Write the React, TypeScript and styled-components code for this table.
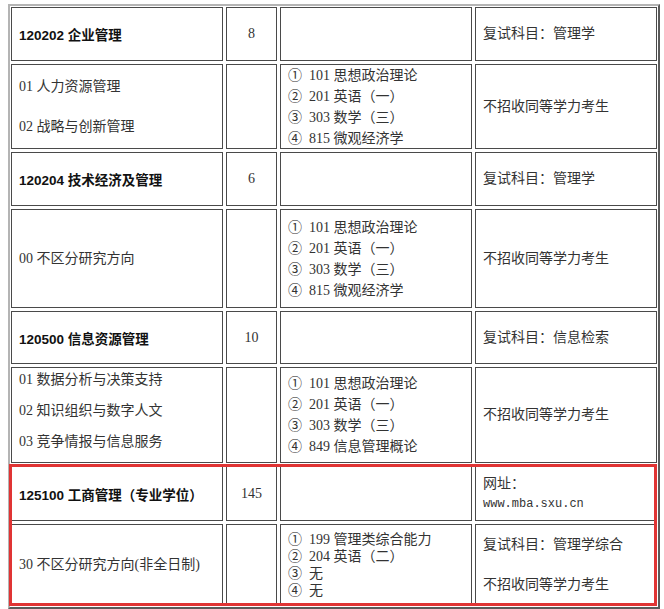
import React from 'react';
import styled, { createGlobalStyle } from 'styled-components';

const GlobalStyle = createGlobalStyle`
  body {
    margin: 0;
    background: #fff;
    font-family: "Liberation Serif", "Noto Sans CJK SC", serif;
  }
`;

const Page = styled.div`
  position: relative;
  padding: 4px 0 0 8px;
`;

const Table = styled.div`
  display: grid;
  grid-template-columns: 212px 51px 192px 182px;
  grid-template-rows: 54px 85px 54px 99px 53px 96px 55px 82px;
  gap: 3px;
  padding: 1px;
  width: max-content;
  border: 2px solid;
  border-color: #b4b4b4 #5a5a5a #5a5a5a #b4b4b4;
`;

const Cell = styled.div<{ $center?: boolean; $gap?: number; $lift?: number }>`
  box-sizing: border-box;
  border: 1px solid #4a4a4a;
  display: flex;
  flex-direction: column;
  justify-content: center;
  align-items: ${p => (p.$center ? 'center' : 'flex-start')};
  gap: ${p => p.$gap ?? 0}px;
  padding: 0 7px ${p => p.$lift ?? 0}px;
  font-size: 14px;
  color: #333;
  white-space: nowrap;
`;

const Title = styled.span`
  font-family: "Liberation Sans", "Noto Sans CJK SC", sans-serif;
  font-weight: 700;
  font-size: 13.5px;
  color: #111;
`;

const Line = styled.div<{ $lh?: number }>`
  line-height: ${p => p.$lh ?? 20}px;
  height: ${p => p.$lh ?? 20}px;
`;

const Mark = styled.span`
  display: inline-block;
  width: 21px;
  font-size: 14px;
`;

const Url = styled.div`
  font-family: "Liberation Mono", monospace;
  font-size: 12px;
  line-height: 20px;
`;

const Highlight = styled.div`
  position: absolute;
  left: 9px;
  top: 464px;
  width: 648px;
  height: 142px;
  box-sizing: border-box;
  border: 3px solid #e03434;
  pointer-events: none;
`;

type Program = {
  title: string;
  count: string;
  note: React.ReactNode;
  directions: string[];
  dirGap: number;
  dirLift?: number;
  exams: string[];
  examLh: number;
  remarks: string[];
};

const marks = ['①', '②', '③', '④'];

const programs: Program[] = [
  {
    title: '120202 企业管理',
    count: '8',
    note: <Line>复试科目：管理学</Line>,
    directions: ['01 人力资源管理', '02 战略与创新管理'],
    dirGap: 20,
    exams: ['101 思想政治理论', '201 英语（一）', '303 数学（三）', '815 微观经济学'],
    examLh: 21,
    remarks: ['不招收同等学力考生'],
  },
  {
    title: '120204 技术经济及管理',
    count: '6',
    note: <Line>复试科目：管理学</Line>,
    directions: ['00 不区分研究方向'],
    dirGap: 0,
    exams: ['101 思想政治理论', '201 英语（一）', '303 数学（三）', '815 微观经济学'],
    examLh: 21,
    remarks: ['不招收同等学力考生'],
  },
  {
    title: '120500 信息资源管理',
    count: '10',
    note: <Line>复试科目：信息检索</Line>,
    directions: ['01 数据分析与决策支持', '02 知识组织与数字人文', '03 竞争情报与信息服务'],
    dirGap: 11,
    dirLift: 8,
    exams: ['101 思想政治理论', '201 英语（一）', '303 数学（三）', '849 信息管理概论'],
    examLh: 21,
    remarks: ['不招收同等学力考生'],
  },
  {
    title: '125100 工商管理（专业学位）',
    count: '145',
    note: (
      <>
        <Line>网址：</Line>
        <Url>www.mba.sxu.cn</Url>
      </>
    ),
    directions: ['30 不区分研究方向(非全日制)'],
    dirGap: 0,
    exams: ['199 管理类综合能力', '204 英语（二）', '无', '无'],
    examLh: 17,
    remarks: ['复试科目：管理学综合', '不招收同等学力考生'],
  },
];

export default function App() {
  return (
    <Page>
      <GlobalStyle />
      <Table>
        {programs.map(p => (
          <React.Fragment key={p.title}>
            <Cell>
              <Title>{p.title}</Title>
            </Cell>
            <Cell $center>{p.count}</Cell>
            <Cell />
            <Cell>{p.note}</Cell>

            <Cell $gap={p.dirGap} $lift={p.dirLift}>
              {p.directions.map(d => (
                <Line key={d}>{d}</Line>
              ))}
            </Cell>
            <Cell />
            <Cell>
              {p.exams.map((e, i) => (
                <Line key={i} $lh={p.examLh}>
                  <Mark>{marks[i]}</Mark>
                  {e}
                </Line>
              ))}
            </Cell>
            <Cell $gap={20}>
              {p.remarks.map(r => (
                <Line key={r}>{r}</Line>
              ))}
            </Cell>
          </React.Fragment>
        ))}
      </Table>
      <Highlight />
    </Page>
  );
}
